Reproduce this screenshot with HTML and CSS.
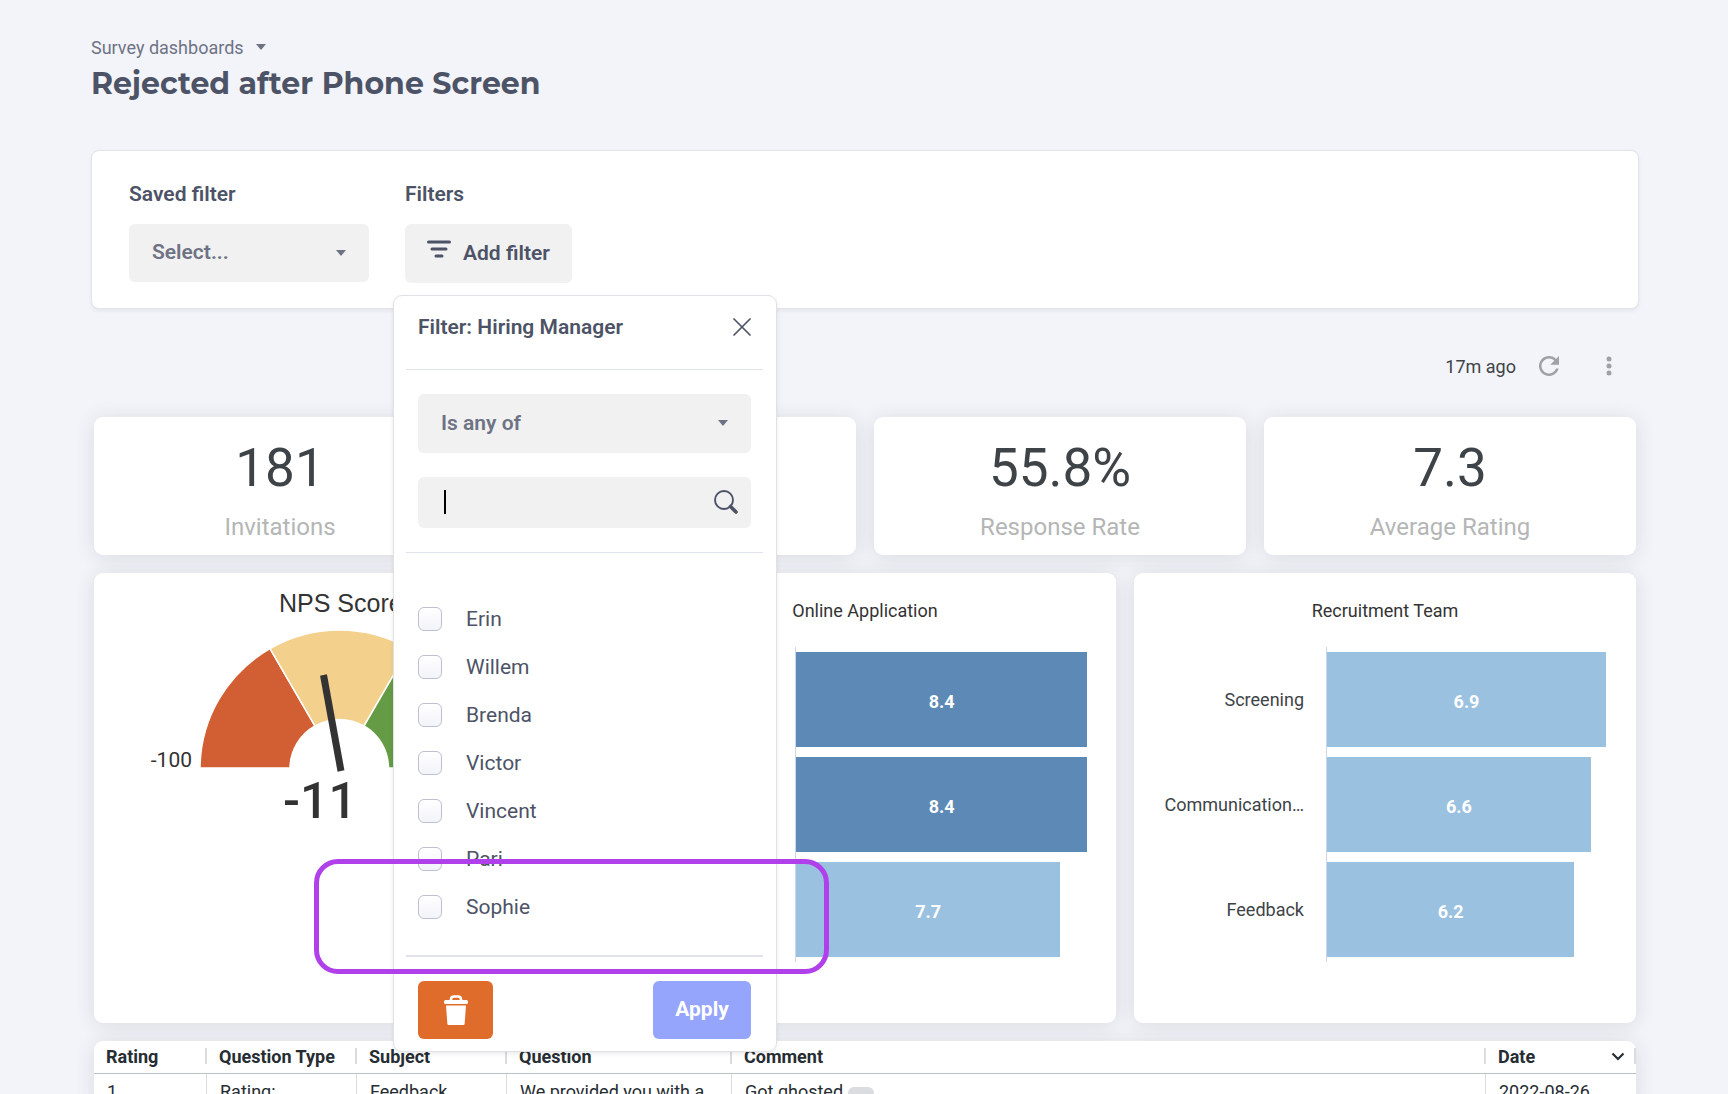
FILE: index.html
```html
<!DOCTYPE html>
<html lang="en">
  <head>
    <meta charset="utf-8">
    <meta name="viewport" content="width=device-width, initial-scale=1">
    <title>Rejected after Phone Screen</title>
    <link rel="stylesheet" href="styles.css">
  </head>
  <body>
    <div class="page">
      <header class="page-header">
        <button type="button" class="breadcrumb">
          Survey dashboards
          <svg class="caret" viewBox="0 0 10 6"><path d="M0 0h10L5 6z"/></svg>
        </button>
        <h1>Rejected after Phone Screen</h1>
      </header>

      <!-- filters -->
      <section class="filter-card">
        <div class="filter-group saved">
          <label class="filter-label" for="savedFilter">Saved filter</label>
          <div class="select-box">
            <select id="savedFilter"><option>Select...</option></select>
            <svg class="caret" viewBox="0 0 10 6"><path d="M0 0h10L5 6z"/></svg>
          </div>
        </div>
        <div class="filter-group">
          <span class="filter-label">Filters</span>
          <div class="popup-anchor">
            <button type="button" class="add-filter">
              <svg width="24" height="18" viewBox="0 0 24 18"><path d="M1.500 2h21M5 9h14M9 16h6" stroke="#4d5366" stroke-width="3" stroke-linecap="round"/></svg>
              Add filter
            </button>

            <!-- filter popup -->
            <form class="popup">
              <div class="popup-header">
                <h2>Filter: Hiring Manager</h2>
                <button type="button" class="close-btn" aria-label="Close">
                  <svg width="18" height="18" viewBox="0 0 18 18"><path d="M1 1l16 16M17 1L1 17" stroke="#4d5366" stroke-width="1.700" stroke-linecap="round"/></svg>
                </button>
              </div>
              <div class="popup-fields">
                <div class="select-box">
                  <select aria-label="Condition"><option>Is any of</option></select>
                  <svg class="caret" viewBox="0 0 10 6"><path d="M0 0h10L5 6z"/></svg>
                </div>
                <div class="search-box">
                  <input type="text" aria-label="Search">
                  <span class="text-cursor"></span>
                  <svg class="search-icon" width="24" height="24" viewBox="0 0 24 24" fill="none" stroke="#4d5366"><circle cx="10" cy="10" r="9" stroke-width="1.900"/><path d="M16.500 16.500l5.500 5.500" stroke-width="3.600" stroke-linecap="round"/></svg>
                </div>
              </div>
              <div class="popup-list">
                <label><input type="checkbox">Erin</label>
                <label><input type="checkbox">Willem</label>
                <label><input type="checkbox">Brenda</label>
                <label><input type="checkbox">Victor</label>
                <label><input type="checkbox">Vincent</label>
                <label><input type="checkbox">Pari</label>
                <label><input type="checkbox">Sophie</label>
              </div>
              <div class="popup-footer">
                <button type="button" class="delete-btn" aria-label="Delete filter">
                  <svg width="24" height="30" viewBox="0 0 24 30"><path d="M7 6V4.500Q7 1.500 10 1.500h4q3 0 3 3V6" fill="none" stroke="#fff" stroke-width="2.600"/><rect y="5" width="24" height="4" rx="1.500" fill="#fff"/><path d="M2 10.500h20L20.600 29q-.1 1-1.200 1H4.600q-1.100 0-1.200-1z" fill="#fff"/></svg>
                </button>
                <button type="button" class="apply-btn">Apply</button>
              </div>
              <div class="highlight"></div>
            </form>
          </div>
        </div>
      </section>

      <!-- dashboard -->
      <main class="dashboard">
        <div class="toolbar">
          <span>17m ago</span>
          <button type="button" aria-label="Refresh">
            <svg width="20" height="20" viewBox="0 0 16 16"><path d="M13.650 2.350A8 8 0 1 0 15.730 10h-2.080A6 6 0 1 1 8 2c1.660 0 3.140.69 4.220 1.780L9 7h7V0z" fill="#9fa1a4"/></svg>
          </button>
          <button type="button" class="more-btn" aria-label="More">
            <svg width="6" height="20" viewBox="0 0 6 20" fill="#9fa1a4"><circle cx="3" cy="3" r="2.500"/><circle cx="3" cy="10" r="2.500"/><circle cx="3" cy="17" r="2.500"/></svg>
          </button>
        </div>

        <div class="kpi-row">
          <div class="tile kpi"><strong>181</strong><span>Invitations</span></div>
          <div class="tile kpi"></div>
          <div class="tile kpi"><strong>55.8%</strong><span>Response Rate</span></div>
          <div class="tile kpi"><strong>7.3</strong><span>Average Rating</span></div>
        </div>

        <div class="chart-row">
          <div class="tile">
            <svg class="gauge" viewBox="0 0 502 450">
              <g stroke="#fff" stroke-width="1.500">
                <path d="M106 195A139 139 0 0 1 176 75.600L221 153A49 49 0 0 0 196 195z" fill="#d25f34"/>
                <path d="M176 75.600A138.500 138.500 0 0 1 314.800 75.600L270 153A49 49 0 0 0 221 153z" fill="#f3d08b"/>
                <path d="M314.800 75.600A138.500 138.500 0 0 1 384 195L294.500 195A49 49 0 0 0 270 153z" fill="#659b45"/>
              </g>
              <path d="M229.500 102L247 198" stroke="#333" stroke-width="7"/>
              <text class="gauge-title" x="185" y="39">NPS Score</text>
              <text class="gauge-min" x="98" y="194" text-anchor="end">-100</text>
              <text class="gauge-value" x="189" y="245">-11</text>
            </svg>
          </div>
          <div class="tile chart">
            <h3>Online Application</h3>
            <div class="bars">
              <div class="bar-row"><span class="bar-label"></span><div class="bar-track"><div class="bar dark" style="width: 91%">8.4</div></div></div>
              <div class="bar-row"><span class="bar-label"></span><div class="bar-track"><div class="bar dark" style="width: 91%">8.4</div></div></div>
              <div class="bar-row"><span class="bar-label"></span><div class="bar-track"><div class="bar" style="width: 82.600%">7.7</div></div></div>
            </div>
          </div>
          <div class="tile chart wide-labels">
            <h3>Recruitment Team</h3>
            <div class="bars">
              <div class="bar-row"><span class="bar-label">Screening</span><div class="bar-track"><div class="bar" style="width: 90.300%">6.9</div></div></div>
              <div class="bar-row"><span class="bar-label">Communication…</span><div class="bar-track"><div class="bar" style="width: 85.400%">6.6</div></div></div>
              <div class="bar-row"><span class="bar-label">Feedback</span><div class="bar-track"><div class="bar" style="width: 80%">6.2</div></div></div>
            </div>
          </div>
        </div>

        <div class="tile">
          <table>
            <colgroup>
              <col class="col-rating"><col class="col-type"><col class="col-subject"><col class="col-question"><col><col class="col-date">
            </colgroup>
            <thead>
              <tr>
                <th><div>Rating</div></th>
                <th><div>Question Type</div></th>
                <th><div>Subject</div></th>
                <th><div>Question</div></th>
                <th><div>Comment</div></th>
                <th><div>Date <svg width="14" height="9" viewBox="0 0 14 9"><path d="M1.500 1.500L7 7l5.500-5.500" fill="none" stroke="#262d33" stroke-width="2.200"/></svg></div></th>
              </tr>
            </thead>
            <tbody>
              <tr>
                <td>1</td>
                <td>Rating:</td>
                <td>Feedback</td>
                <td>We provided you with a</td>
                <td>Got ghosted <button type="button" class="more-text">...</button></td>
                <td>2022-08-26</td>
              </tr>
            </tbody>
          </table>
        </div>
      </main>
    </div>
  </body>
</html>
```
FILE: styles.css
```css
* {
  box-sizing: border-box;
}

body {
  margin: 0;
  background: #f3f4f9;
  color: #4d5366;
  font-family: Roboto, "Liberation Sans", sans-serif;
  font-size: 18px;
}

button,
select,
input {
  margin: 0;
  padding: 0;
  border: 0;
  background: none;
  color: inherit;
  font: inherit;
}

button {
  cursor: pointer;
}

svg {
  display: block;
}

.page {
  height: 100vh;
  padding: 35px 89px 0 91px;
  overflow-y: auto;
  scrollbar-width: none;
}

/* header */
.breadcrumb {
  display: flex;
  align-items: center;
  gap: 12px;
  height: 24px;
  color: #6d7385;
}

.caret {
  width: 10px;
  height: 6px;
  fill: #6d7385;
}

h1 {
  margin: 5px 0 46px;
  font-family: Montserrat, Inter, sans-serif;
  font-size: 30px;
  line-height: 40px;
  font-weight: 700;
}

/* filter card */
.filter-card {
  display: flex;
  gap: 36px;
  height: 159px;
  padding: 30px 37px;
  background: #fff;
  border: 1px solid #e3e4e8;
  border-radius: 8px;
  box-shadow: 0 2px 4px rgba(0, 0, 0, 0.06);
}

.saved {
  width: 240px;
}

.filter-label {
  display: block;
  height: 43px;
  font-size: 21px;
  line-height: 26px;
  font-weight: 600;
}

.select-box {
  position: relative;
}

.select-box select {
  display: block;
  width: 100%;
  height: 58px;
  padding: 0 23px 2px;
  appearance: none;
  background: #f1f1f1;
  border-radius: 6px;
  color: #6d7385;
  font-size: 21px;
  font-weight: 600;
}

.select-box .caret {
  position: absolute;
  top: 26px;
  right: 23px;
}

.popup-anchor {
  position: relative;
}

.add-filter {
  display: flex;
  align-items: center;
  gap: 12px;
  height: 59px;
  padding: 0 22px 2px;
  background: #f1f1f1;
  border-radius: 6px;
  font-size: 21px;
  font-weight: 600;
  white-space: nowrap;
}

.add-filter svg {
  margin-bottom: 8px;
}

/* popup */
.popup {
  position: absolute;
  top: 71px;
  left: -12px;
  z-index: 10;
  width: 384px;
  padding: 0 13px 12px 12px;
  background: #fff;
  border: 1px solid #e0e1e6;
  border-radius: 9px;
  box-shadow: 0 2px 4px rgba(0, 0, 0, 0.08);
}

.popup-header {
  display: flex;
  justify-content: space-between;
  align-items: flex-start;
  height: 74px;
  padding: 18px 12px 0;
  border-bottom: 1px solid #e0e2ec;
}

h2 {
  margin: 0;
  font-size: 21px;
  line-height: 26px;
  font-weight: 600;
}

.close-btn {
  padding-top: 4px;
}

.popup-fields {
  display: flex;
  flex-direction: column;
  gap: 24px;
  padding: 24px 12px;
  border-bottom: 1px solid #e0e2ec;
}

.popup-fields select {
  height: 59px;
}

.search-box {
  position: relative;
}

.search-box input {
  display: block;
  width: 100%;
  height: 51px;
  padding: 0 52px 0 24px;
  background: #f1f1f1;
  border-radius: 6px;
  font-size: 21px;
  outline: none;
}

.text-cursor {
  position: absolute;
  top: 13px;
  left: 26px;
  width: 2px;
  height: 24px;
  background: #000;
}

.search-icon {
  position: absolute;
  top: 13px;
  right: 13px;
}

.popup-list {
  padding: 42px 12px 24px;
  border-bottom: 2px solid #e0e2ec;
}

.popup-list label {
  display: flex;
  align-items: center;
  gap: 24px;
  height: 48px;
  font-size: 21px;
}

.popup-list input {
  width: 24px;
  height: 24px;
  appearance: none;
  background: linear-gradient(#fff, #f3f4f9);
  border: 1px solid #bcc0d0;
  border-radius: 6px;
}

.popup-footer {
  display: flex;
  justify-content: space-between;
  padding: 24px 12px 0;
}

.popup-footer button {
  height: 58px;
  border-radius: 6px;
}

.delete-btn {
  display: grid;
  place-items: center;
  width: 75px;
  background: #e06c2c;
}

.apply-btn {
  width: 98px;
  padding-bottom: 2px;
  background: #95a5fb;
  color: #fff;
  font-size: 21px;
  font-weight: 700;
}

.highlight {
  position: absolute;
  left: -80px;
  right: -53px;
  bottom: 77px;
  height: 115px;
  border: 5px solid #b041ea;
  border-radius: 24px;
  pointer-events: none;
}

/* dashboard */
.dashboard {
  display: flex;
  flex-direction: column;
  gap: 18px;
  padding: 0 3px;
  color: #3e4347;
}

.toolbar {
  display: flex;
  justify-content: flex-end;
  align-items: center;
  gap: 23px;
  height: 90px;
  padding: 24px 24px 0 0;
}

.more-btn {
  margin-left: 24px;
}

.tile {
  background: #fff;
  border-radius: 9px;
  box-shadow: 0 2px 20px rgba(40, 42, 50, 0.12);
}

.kpi-row {
  display: grid;
  grid-template-columns: repeat(4, 1fr);
  gap: 18px;
}

.kpi {
  display: flex;
  flex-direction: column;
  align-items: center;
  height: 138px;
  padding-top: 18px;
}

.kpi strong {
  font-size: 53px;
  line-height: 66px;
  font-weight: 400;
}

.kpi span {
  margin-top: 12px;
  color: #b4b6b6;
  font-size: 24px;
  line-height: 28px;
}

.chart-row {
  display: grid;
  grid-template-columns: repeat(3, 1fr);
  gap: 18px;
}

.gauge {
  width: 100%;
  font-family: Roboto, "Liberation Sans", sans-serif;
  fill: #333;
}

.gauge-title {
  font-family: "Liberation Sans", Arial, sans-serif;
  font-size: 25px;
}

.gauge-min {
  font-size: 21px;
}

.gauge-value {
  font-size: 50px;
  font-weight: 500;
}

.chart {
  height: 450px;
  padding-top: 26px;
}

h3 {
  margin: 0 0 24px;
  color: #333;
  font-size: 18px;
  line-height: 24px;
  font-weight: 400;
  text-align: center;
}

.bar-row {
  display: grid;
  grid-template-columns: 181px 1fr;
  align-items: center;
}

.wide-labels .bar-row {
  grid-template-columns: 192px 1fr;
}

.bar-label {
  padding-right: 22px;
  text-align: right;
}

.bar-track {
  padding: 5px 0;
  border-left: 1px solid #ccd6eb;
}

.bar {
  display: grid;
  place-items: center;
  height: 95px;
  padding-top: 3px;
  background: #9bc1e1;
  color: #fff;
  font-weight: 700;
}

.bar.dark {
  background: #5d89b6;
}

/* table */
table {
  width: 100%;
  table-layout: fixed;
  border-collapse: separate;
  border-spacing: 0;
  color: #262d33;
}

.col-rating {
  width: 113px;
}

.col-type,
.col-subject {
  width: 150px;
}

.col-question {
  width: 225px;
}

.col-date {
  width: 150px;
}

th {
  height: 33px;
  padding: 0 0 2px;
  border-bottom: 1px solid #bdc1c6;
  text-align: left;
}

th div {
  display: flex;
  justify-content: space-between;
  align-items: center;
  height: 16px;
  padding: 0 9px 0 12px;
  border-right: 2px solid #dadce0;
}

td {
  padding: 6px 12px 8px 13px;
  border-right: 1px solid #dadce0;
  line-height: 24px;
  vertical-align: top;
}

td:last-child {
  border-right: 0;
}

.more-text {
  width: 26px;
  height: 16px;
  padding-bottom: 8px;
  background: #dadce0;
  border-radius: 6px;
  line-height: 8px;
  vertical-align: top;
  margin-top: 7px;
}
```
